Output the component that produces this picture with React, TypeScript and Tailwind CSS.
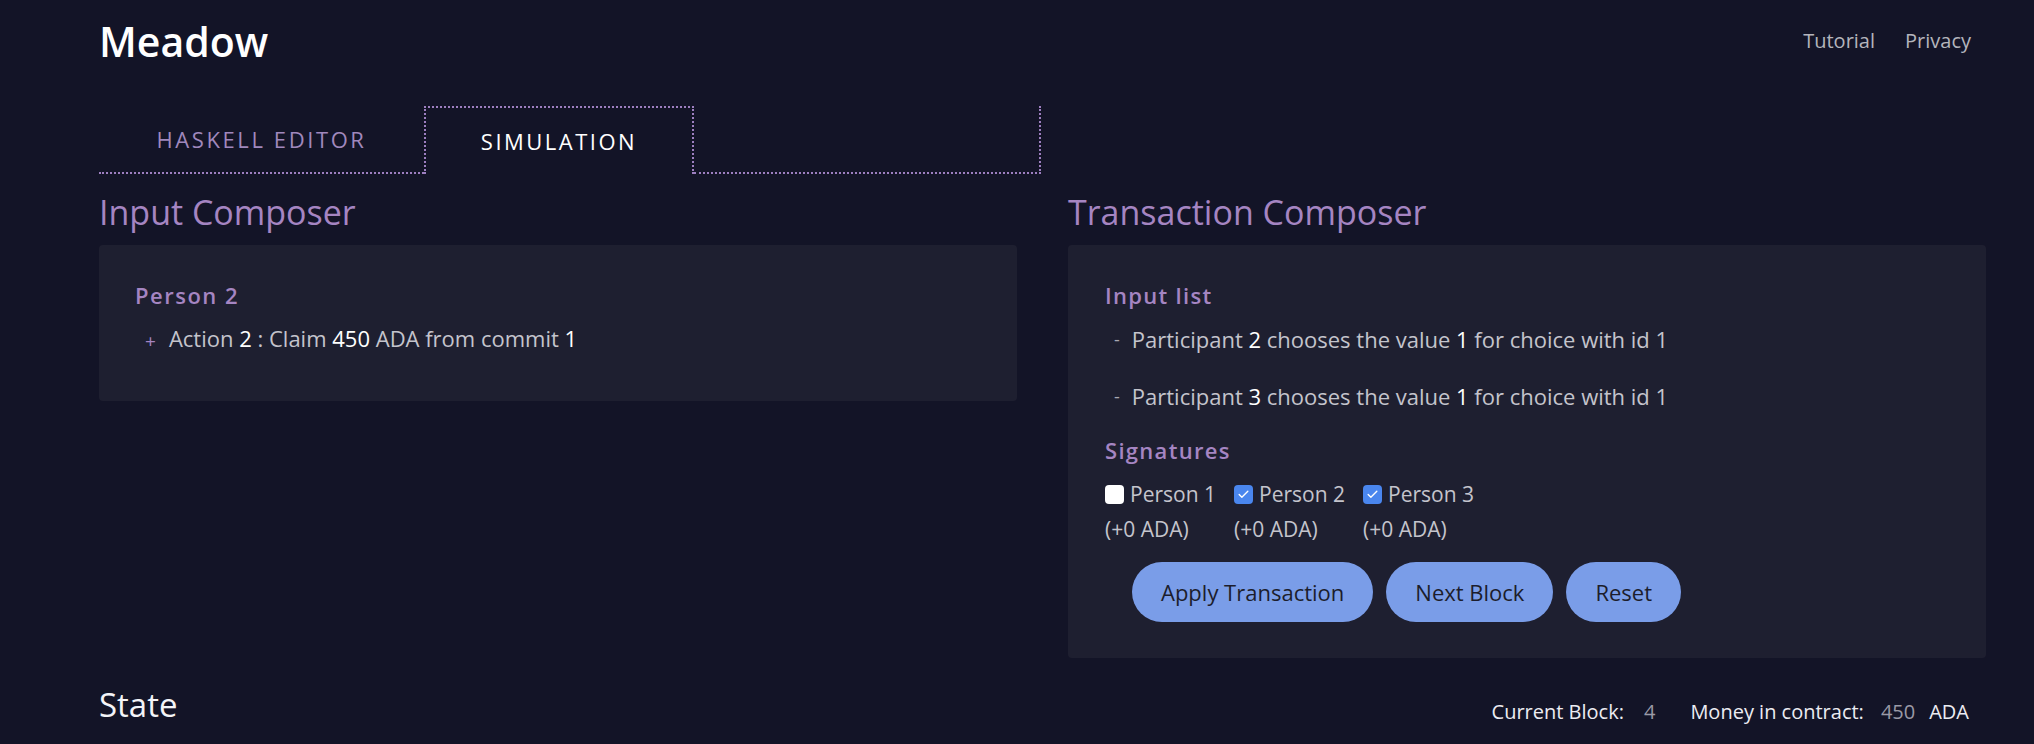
import { Check } from 'lucide-react';

type Sig = { name: string; checked: boolean };

const signatures: Sig[] = [
  { name: 'Person 1', checked: false },
  { name: 'Person 2', checked: true },
  { name: 'Person 3', checked: true },
];

const choices = [
  { participant: 2, value: 1, id: 1 },
  { participant: 3, value: 1, id: 1 },
];

export default function App() {
  return (
    <div className="min-h-screen bg-[#131427] pl-[99px] pr-[48px] font-['Open_Sans',sans-serif] text-[#c4c4cc]">
      <header className="h-[82px] flex items-center justify-between pr-[15px]">
        <h1 className="text-[41px] font-semibold leading-none text-white">Meadow</h1>
        <nav className="flex items-center gap-[30px] text-[20px] text-[#b4b4bc]">
          <a>Tutorial</a>
          <a>Privacy</a>
        </nav>
      </header>

      <div className="mt-[24px] flex h-[68px]">
        <div className="w-[325px] flex items-center justify-center border-b-2 border-dotted border-[#9d7fc0] text-[22px] tracking-[2.6px] text-[#a088bd]">
          HASKELL EDITOR
        </div>
        <div className="w-[270px] flex items-center justify-center border-t-2 border-l-2 border-r-2 border-dotted border-[#9d7fc0] text-[22px] tracking-[2.5px] text-white">
          SIMULATION
        </div>
        <div className="w-[347px] border-b-2 border-r-2 border-dotted border-[#9d7fc0]" />
      </div>

      <div className="mt-[18px] grid grid-cols-2 gap-x-[51px] items-start">
        <section>
          <h2 className="text-[34px] leading-[40px] text-[#a585c2] mb-[13px]">Input Composer</h2>
          <div className="h-[156px] rounded-[4px] bg-[#1e1f30] pl-[36px] pt-[35px]">
            <p className="text-[22px] leading-[30px] font-semibold tracking-[1.5px] text-[#a585c2]">Person 2</p>
            <p className="mt-[13px] flex items-center text-[22px] leading-[30px]">
              <span className="ml-[10px] mr-[13px] text-[19px] text-[#a585c2] translate-y-[3px]">+</span>
              <span>
                Action <b className="font-normal text-white">2</b> : Claim <b className="font-normal text-white">450</b> ADA from commit{' '}
                <b className="font-normal text-white">1</b>
              </span>
            </p>
          </div>
        </section>

        <section>
          <h2 className="text-[34px] leading-[40px] text-[#a585c2] mb-[13px]">Transaction Composer</h2>
          <div className="rounded-[4px] bg-[#1e1f30] pl-[37px] pt-[35px] pb-[36px]">
            <p className="text-[22px] leading-[30px] font-semibold tracking-[1.3px] text-[#a585c2]">Input list</p>
            <div className="mt-[1px]">
              {choices.map((c) => (
                <div key={c.participant} className="h-[57px] flex items-center text-[22px]">
                  <span className="ml-[9px] mr-[12px] text-[18px] text-[#a8a8b2]">-</span>
                  <span>
                    Participant <b className="font-normal text-white">{c.participant}</b> chooses the value{' '}
                    <b className="font-normal text-white">{c.value}</b> for choice with id {c.id}
                  </span>
                </div>
              ))}
            </div>

            <p className="mt-[10px] text-[22px] leading-[30px] font-semibold tracking-[1.3px] text-[#a585c2]">Signatures</p>
            <div className="mt-[12px] flex text-[21px] leading-[35px]">
              {signatures.map((s) => (
                <div key={s.name} className="w-[129px]">
                  <label className="flex items-center gap-[6px]">
                    {s.checked ? (
                      <span className="w-[19px] h-[19px] rounded-[4px] bg-[#4a86ee] flex items-center justify-center">
                        <Check className="w-[13px] h-[13px] text-white" strokeWidth={2.5} />
                      </span>
                    ) : (
                      <span className="w-[19px] h-[19px] rounded-[4px] bg-white" />
                    )}
                    {s.name}
                  </label>
                  <p>(+0 ADA)</p>
                </div>
              ))}
            </div>

            <div className="mt-[15px] ml-[27px] flex gap-[13px]">
              {['Apply Transaction', 'Next Block', 'Reset'].map((b) => (
                <button key={b} className="h-[60px] px-[29px] rounded-full bg-[#7a9de8] text-[22px] text-[#1c1d2c]">
                  {b}
                </button>
              ))}
            </div>
          </div>
        </section>
      </div>

      <div className="mt-[27px] flex items-end justify-between pr-[17px]">
        <h2 className="text-[33px] leading-[40px] text-[#f4f4f8]">State</h2>
        <div className="flex items-center text-[20px] leading-[26px] text-[#ececf2]">
          <span>Current Block:</span>
          <span className="ml-[20px] text-[#9a9aa6]">4</span>
          <span className="ml-[35px]">Money in contract:</span>
          <span className="ml-[17px] text-[#9a9aa6]">450</span>
          <span className="ml-[14px]">ADA</span>
        </div>
      </div>
    </div>
  );
}
